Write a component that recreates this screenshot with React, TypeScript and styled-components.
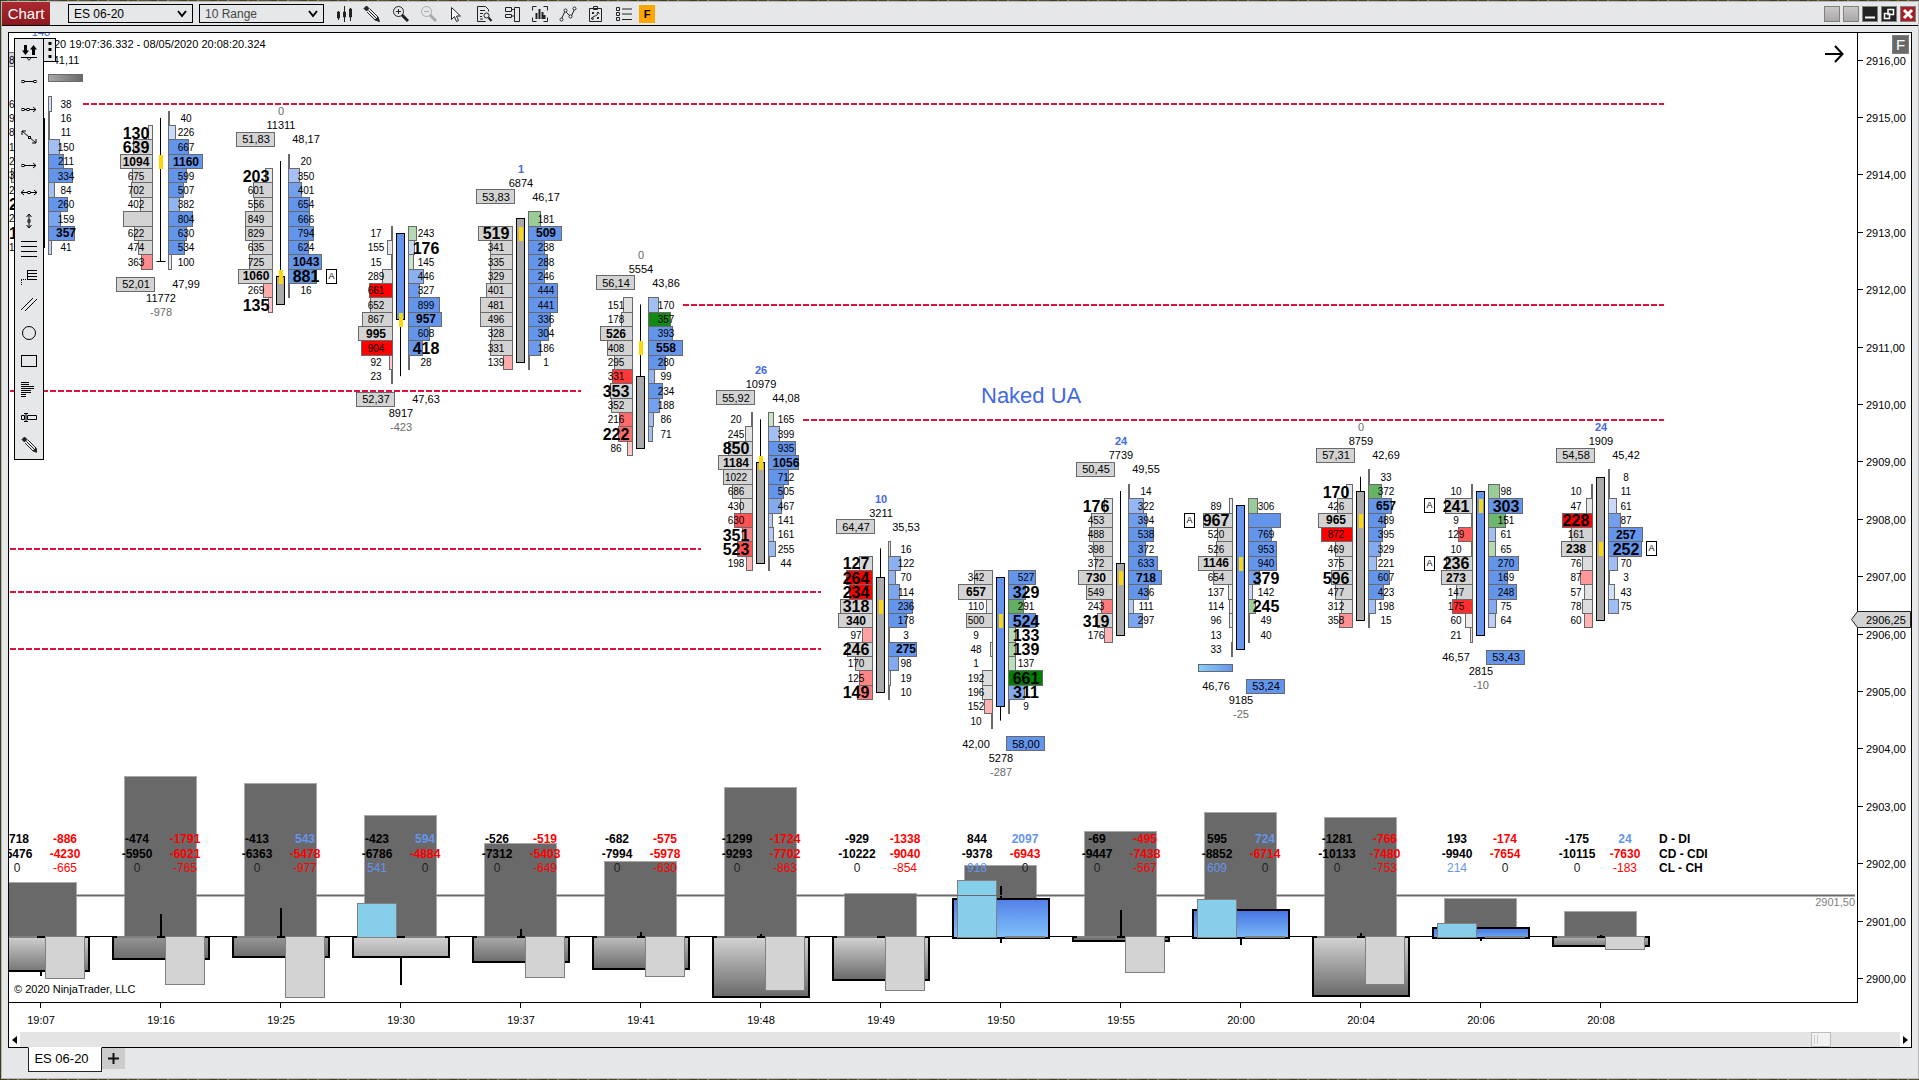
import React from "react";
import styled, { createGlobalStyle } from "styled-components";

/* ---------- data ---------- */

type Side = "L" | "R" | "";

interface Column {
  time: string;
  askStart: number;
  bids: string[];
  bidStart: number;
  asks: string[];
  wick?: [number, number];
  body: [number, number];
  up?: boolean;
  flat?: boolean;
  poc?: number;
  flags?: [Side, number][];
  summary?: { at: "top" | "bottom"; left: string; right: string; boxed: Side; volume: string; count: string; gap?: number };
  strip?: { side: Side; tick: number; up: boolean };
  volTop: number;
  delta: { top?: number; bottom?: number; from: string; to: string; wicks?: [number, number][] };
  low?: number;
  high?: number;
  table: [string, string, string, string, string, string];
}

// Cell notation: volume, b / B for emphasis, then r (sell imbalance), g (buy
// imbalance) or a (plain) with an opacity in percent. "_" hides the number.
const columns: Column[] = [
  {
    time: "19:07", bidStart: 3, bids: [], askStart: 3,
    asks: ["38a30", "16", "11", "150a60", "211", "334", "84a60", "260", "159a85", "357b", "41a40"],
    body: [4, 13], strip: { side: "R", tick: 1.2, up: false },
    volTop: 882, delta: { bottom: 972, from: "#cfcfcf", to: "#767676", wicks: [[972, 976]] }, high: 978,
    table: ["-718", "-886", "-5476", "-4230", "0", "-665"],
  },
  {
    time: "19:16", bidStart: 5, askStart: 4,
    bids: ["130B", "639B", "1094b", "675", "702", "402", "_1000", "622", "474", "363r45"],
    asks: ["40a0", "226a35", "667", "1160b", "599", "507", "382a70", "804", "630", "534", "100a20"],
    wick: [4, 14], body: [14, 14], flat: true, poc: 7,
    summary: { at: "bottom", left: "52,01", right: "47,99", boxed: "L", volume: "11772", count: "-978" },
    volTop: 776, delta: { bottom: 960, from: "#949494", to: "#6c6c6c", wicks: [[914, 936]] }, high: 984,
    table: ["-474", "-1791", "-5950", "-6021", "0", "-765"],
  },
  {
    time: "19:25", bidStart: 8, askStart: 7,
    bids: ["203B", "601", "556", "849", "829", "635", "725", "1060b", "269r33", "135Br22"],
    asks: ["20", "350a58", "401a90", "654", "666", "794", "624", "1043b", "881B", "16"],
    wick: [7, 15], body: [15, 17], poc: 15, flags: [["R", 15]],
    summary: { at: "top", left: "51,83", right: "48,17", boxed: "L", volume: "11311", count: "0" },
    volTop: 783, delta: { bottom: 958, from: "#989898", to: "#6c6c6c", wicks: [[908, 936]] }, high: 997,
    table: ["-413", "543", "-6363", "-5478", "0", "-977"],
  },
  {
    time: "19:30", bidStart: 12, askStart: 12,
    bids: ["17", "155", "15", "289", "661r100", "652", "867", "995b", "904r100", "92r22", "23"],
    asks: ["243g30", "176Ba38", "145g22", "446a75", "327a95", "899", "957b", "608", "418B", "28"],
    wick: [18, 22], body: [12, 18], up: true, poc: 18,
    summary: { at: "bottom", left: "52,37", right: "47,63", boxed: "L", volume: "8917", count: "-423" },
    volTop: 815, delta: { bottom: 958, from: "#d3d3d3", to: "#a9a9a9", wicks: [[958, 985]] }, low: 903,
    table: ["-423", "594", "-6786", "-4884", "541", "0"],
  },
  {
    time: "19:37", bidStart: 12, askStart: 11,
    bids: ["519B", "341", "335", "329", "401", "481", "496", "328", "331", "139r33"],
    asks: ["181g40", "509b", "238", "288", "246", "444", "441", "336", "304", "186", "1"],
    body: [11, 21], poc: 12,
    summary: { at: "top", left: "53,83", right: "46,17", boxed: "L", volume: "6874", count: "1" },
    volTop: 843, delta: { bottom: 963, from: "#aaaaaa", to: "#6c6c6c", wicks: [[929, 936]] }, high: 977,
    table: ["-526", "-519", "-7312", "-5403", "0", "-649"],
  },
  {
    time: "19:41", bidStart: 17, askStart: 17,
    bids: ["151", "178", "526b", "408", "295", "331r78", "353B", "352", "216r58", "222Br58", "86r22"],
    asks: ["170a60", "357g93", "393", "558b", "280", "99a70", "234", "188", "86a60", "71a60"],
    wick: [17, 22], body: [22, 27], poc: 20,
    summary: { at: "top", left: "56,14", right: "43,86", boxed: "L", volume: "5554", count: "0" },
    volTop: 861, delta: { bottom: 970, from: "#bdbdbd", to: "#6c6c6c", wicks: [[932, 936]] }, high: 976,
    table: ["-682", "-575", "-7994", "-5978", "0", "-630"],
  },
  {
    time: "19:48", bidStart: 25, askStart: 25,
    bids: ["20", "245", "850B", "1184b", "1022", "686", "430", "630r68", "351Br50", "523Br68", "198r30"],
    asks: ["165g22", "399a60", "935", "1056b", "712", "505", "467a80", "141a50", "161a50", "255a65", "44a20"],
    wick: [25, 28], body: [28, 35], poc: 28,
    summary: { at: "top", left: "55,92", right: "44,08", boxed: "L", volume: "10979", count: "26" },
    volTop: 787, delta: { bottom: 998, from: "#d3d3d3", to: "#696969", wicks: [[934, 936]] }, high: 990,
    table: ["-1299", "-1724", "-9293", "-7702", "0", "-863"],
  },
  {
    time: "19:49", bidStart: 35, askStart: 34,
    bids: ["127B", "264Br100", "234Br100", "318B", "340b", "97r37", "246B", "170", "125r48", "149Br52"],
    asks: ["16g15", "122a75", "70a70", "114a85", "236", "178", "3", "275b", "98a80", "19a30", "10"],
    wick: [34, 36], body: [36, 44], poc: 38,
    summary: { at: "top", left: "64,47", right: "35,53", boxed: "L", volume: "3211", count: "10" },
    volTop: 893, delta: { bottom: 981, from: "#d3d3d3", to: "#696969" }, high: 990,
    table: ["-929", "-1338", "-10222", "-9040", "0", "-854"],
  },
  {
    time: "19:50", bidStart: 36, askStart: 36,
    bids: ["342", "657b", "110", "500", "9", "48", "1", "192", "196", "152r30", "10"],
    asks: ["527", "329B", "291g62", "524B", "133Bg28", "139Bg34", "137g27", "661Bg100", "311Ba80", "9"],
    wick: [45, 46], body: [36, 45], up: true, poc: 39,
    summary: { at: "bottom", left: "42,00", right: "58,00", boxed: "R", volume: "5278", count: "-287" },
    volTop: 865, delta: { top: 898, bottom: 939, from: "#5180e8", to: "#82c2fa", wicks: [[886, 898], [939, 943]] }, low: 880,
    table: ["844", "2097", "-9378", "-6943", "918", "0"],
  },
  {
    time: "19:55", bidStart: 31, askStart: 30,
    bids: ["176B", "453", "488", "398", "372", "730b", "549", "243r52", "319B", "176r30"],
    asks: ["14", "322a68", "394a92", "538", "372", "633", "718b", "436", "111a50", "297a85"],
    wick: [30, 35], body: [35, 40], poc: 36,
    summary: { at: "top", left: "50,45", right: "49,55", boxed: "L", volume: "7739", count: "24" },
    volTop: 831, delta: { bottom: 942, from: "#7c7c7c", to: "#6c6c6c", wicks: [[910, 936]] }, high: 972,
    table: ["-69", "-495", "-9447", "-7438", "0", "-567"],
  },
  {
    time: "20:00", bidStart: 31, askStart: 31,
    bids: ["89", "967B", "520", "526", "1146b", "654", "137", "114", "96", "13", "33"],
    asks: ["306g40", "_1080", "769", "953", "940", "379B", "142a35", "245Bg38", "49g0", "40g0"],
    body: [31, 41], up: true, poc: 35, flags: [["L", 32]],
    summary: { at: "bottom", left: "46,76", right: "53,24", boxed: "R", volume: "9185", count: "-25", gap: 37 },
    strip: { side: "L", tick: 42.3, up: true },
    volTop: 812, delta: { top: 909, bottom: 939, from: "#4472e2", to: "#7cbaf8", wicks: [[939, 945]] }, low: 899,
    table: ["595", "724", "-8852", "-6714", "609", "0"],
  },
  {
    time: "20:04", bidStart: 30, askStart: 29,
    bids: ["170B", "426", "965b", "872r100", "469", "375", "596B", "477", "312", "358r43"],
    asks: ["33g0", "372g60", "657b", "489", "395", "329a80", "221a62", "607", "423", "198a60", "15"],
    wick: [29, 30], body: [30, 39], poc: 32,
    summary: { at: "top", left: "57,31", right: "42,69", boxed: "L", volume: "8759", count: "0" },
    volTop: 817, delta: { bottom: 997, from: "#d3d3d3", to: "#696969", wicks: [[933, 936]] }, high: 984,
    table: ["-1281", "-766", "-10133", "-7480", "0", "-753"],
  },
  {
    time: "20:06", bidStart: 30, askStart: 30,
    bids: ["10", "241B", "9", "129r65", "10", "236B", "273b", "147", "175r82", "60a45", "21r15"],
    asks: ["98g40", "303B", "151g57", "61a60", "65g30", "270", "169", "248", "75a80", "64a45"],
    body: [30, 40], up: true, poc: 31, flags: [["L", 31], ["L", 35]],
    summary: { at: "bottom", left: "46,57", right: "53,43", boxed: "R", volume: "2815", count: "-10" },
    volTop: 898, delta: { top: 927, bottom: 939, from: "#4777e4", to: "#6ea8f2", wicks: [[939, 941]] }, low: 923,
    table: ["193", "-174", "-9940", "-7654", "214", "0"],
  },
  {
    time: "20:08", bidStart: 30, askStart: 29,
    bids: ["10", "47", "228Br100", "161", "238b", "76", "87r40", "57", "78", "60r30"],
    asks: ["8g0", "11a0", "61a35", "87", "257b", "252B", "70a62", "3", "43a30", "75a62"],
    body: [29, 39], poc: 34, flags: [["R", 34]],
    summary: { at: "top", left: "54,58", right: "45,42", boxed: "L", volume: "1909", count: "24" },
    volTop: 911, delta: { bottom: 947, from: "#b4b4b4", to: "#7c7c7c", wicks: [[935, 936]] }, high: 949,
    table: ["-175", "24", "-10115", "-7630", "0", "-183"],
  },
];

const nakedLevels: [number, number, number][] = [
  [83, 1664, 104], [683, 1664, 305], [10, 581, 391], [803, 1664, 420],
  [10, 701, 549], [10, 821, 592], [10, 821, 649],
];

/* ---------- scales ---------- */

const tickY = (n: number) => 60.5 + 14.35 * n;
const rowTop = (n: number) => Math.round(tickY(n) - 7.2) + 0.5;
const columnX = (i: number) => 40.5 + 120 * i;
const BAR = 34;
const ZERO = 936;

const parse = (cell: string) => {
  const m = /^(_?)(\d+)([bB]?)([rga]?)(\d*)$/.exec(cell)!;
  return { hidden: m[1] === "_", value: +m[2], text: m[2], weight: m[3], kind: m[4], alpha: m[5] === "" ? null : +m[5] / 100 };
};

/* ---------- styles ---------- */

const ARIAL = `"Liberation Sans", Arial, sans-serif`;

const GlobalStyle = createGlobalStyle`
  * { box-sizing: border-box; }
  body {
    margin: 0;
    font-family: ${ARIAL};
    font-size: 12px;
    color: #000;
    background: repeating-linear-gradient(90deg, #3a3d1c 0 7px, #6d6f3a 7px 9px, #4a4028 9px 17px, #7c8a3c 17px 19px, #55503c 19px 30px);
  }
  button { font-family: inherit; padding: 0; border: 0; background: none; color: inherit; }
`;

const Desktop = styled.div`
  min-height: 100vh;
  padding: 1px 0 1px 1px;
  display: flex;
  flex-direction: column;
`;

const Window = styled.main`
  flex: 1;
  display: flex;
  flex-direction: column;
  border: 1px solid #b8b8b8;
  background: #e5e7e9;
`;

const TitleBar = styled.header`
  display: flex;
  align-items: center;
  height: 24px;
  border-bottom: 1px solid #000;
`;

const ChartMenu = styled.button`
  align-self: stretch;
  width: 48px;
  margin-right: 18px;
  font-size: 15px;
  color: #fff;
  background: linear-gradient(#ac2a30, #8c181e);
`;

const Picker = styled.label`
  position: relative;
  display: flex;
  margin-right: 6px;
  svg { position: absolute; right: 6px; top: 6px; pointer-events: none; }
`;

const PickerSelect = styled.select<{ $tone: string }>`
  appearance: none;
  width: 125px;
  height: 19px;
  padding: 0 5px;
  border: 1px solid #000;
  border-radius: 0;
  background: #e5e7e9;
  color: ${(p) => p.$tone};
  font: 12px ${ARIAL};
`;

const ToolGroup = styled.div`
  display: flex;
  align-items: center;
`;

const ToolButton = styled.button<{ $faded?: boolean }>`
  width: 28px;
  height: 22px;
  display: grid;
  place-items: center;
  opacity: ${(p) => (p.$faded ? 0.3 : 1)};
`;

const FixedBadge = styled.button`
  width: 16px;
  height: 18px;
  margin-left: 1px;
  background: #ffa500;
  font-size: 11px;
  font-weight: bold;
`;

const WindowControls = styled.div`
  display: flex;
  gap: 3px;
  margin-left: auto;
  padding-right: 2px;
`;

const ControlButton = styled.button<{ $fill: string }>`
  width: 16px;
  height: 16px;
  display: grid;
  place-items: center;
  border: 1px solid #808080;
  background: ${(p) => p.$fill};
`;

const Panel = styled.section`
  position: relative;
  margin: 6px 6px 0;
  border: 1px solid #000;
  background: #fff;
`;

const ChartRow = styled.div`
  display: flex;
`;

const Plot = styled.svg`
  display: block;
  flex: 1;
  min-width: 0;
  height: 999px;
`;

const PriceAxis = styled.svg`
  display: block;
  flex: none;
  width: 54px;
  height: 999px;
  overflow: visible;
`;

const Label = styled.text<{ $size?: number; $bold?: boolean; $fill?: string; $anchor?: string }>`
  font-family: ${ARIAL};
  font-size: ${(p) => p.$size ?? 11}px;
  font-weight: ${(p) => (p.$bold ? "bold" : "normal")};
  fill: ${(p) => p.$fill ?? "#000"};
  text-anchor: ${(p) => p.$anchor ?? "middle"};
`;

const DrawingTools = styled.nav`
  position: absolute;
  left: 5px;
  top: 5px;
  display: flex;
  align-items: flex-start;
`;

const DrawingList = styled.div`
  display: flex;
  flex-direction: column;
  width: 30px;
  border: 1px solid #000;
  background: #e5e7e9;
`;

const DrawingButton = styled.button`
  height: 28px;
  display: grid;
  place-items: center;
`;

const Handle = styled.button`
  width: 13px;
  height: 24px;
  margin-left: -1px;
  display: grid;
  place-items: center;
  border: 1px solid #000;
  background: #e5e7e9;
`;

const JumpButton = styled.button`
  position: absolute;
  top: 12px;
  right: 67px;
  display: flex;
`;

const AxisBadge = styled.button`
  position: absolute;
  top: 2px;
  right: 2px;
  width: 17px;
  height: 19px;
  border: 1px solid #808080;
  background: #696969;
  color: #fff;
  font-size: 15px;
  line-height: 17px;
`;

const ScrollBar = styled.div`
  display: flex;
  height: 15px;
  background: #e4e4e4;
`;

const ScrollArrow = styled.button`
  width: 11px;
  display: grid;
  place-items: center;
  background: #fff;
`;

const ScrollTrack = styled.div`
  flex: 1;
  display: flex;
  justify-content: flex-end;
  padding-right: 69px;
`;

const ScrollThumb = styled.div`
  width: 20px;
  border: 1px solid #bcbcbc;
  background: #f1f1f1;
  display: flex;
  gap: 2px;
  padding: 2px;
  &::before, &::after { content: ""; width: 1px; background: #cfcfcf; }
`;

const TabBar = styled.footer`
  display: flex;
  align-items: flex-start;
  min-height: 31px;
  margin-top: -1px;
  padding-left: 26px;
  z-index: 1;
`;

const Tab = styled.button`
  width: 74px;
  height: 25px;
  padding: 0 7px 2px 0;
  border: 1px solid #222;
  border-top-color: #fff;
  background: #fff;
  font-size: 13px;
`;

const AddTab = styled.button`
  width: 23px;
  height: 21px;
  margin-top: 1px;
  padding-bottom: 1px;
  display: grid;
  place-items: center;
  background: #cccccc;
`;

/* ---------- icons ---------- */

const Icon = ({ children, w = 18, h = 18 }: { children: React.ReactNode; w?: number; h?: number }) => (
  <svg width={w} height={h} viewBox={`0 0 ${w} ${h}`} fill="none" stroke="#222" strokeWidth={1} aria-hidden="true">
    {children}
  </svg>
);

const Pencil = () => (
  <g stroke="#222">
    <path d="M1 3.500l2.500-2.500 2.500 2.500-2.500 2.500z" fill="#222" />
    <path d="M4 7l8 8M7 4l8 8M5.500 5.500l8 8" />
    <path d="M12 15l4.500 1.500-1.500-4.500z" fill="#222" />
  </g>
);

const Knob = ({ x, y }: { x: number; y: number }) => (
  <rect x={x - 1} y={y - 1} width={2} height={2} fill="#fff" stroke="#000" />
);

const toolbarIcons: [string, React.ReactNode, boolean?][] = [
  ["Chart style", <><path d="M3.500 6v9M9.500 1v16M15.500 3v13" /><path d="M2.500 7h2v6h-2zM8.500 7h2v5h-2zM14.500 4h2v8h-2z" fill="#222" /></>],
  ["Drawing tools", <Pencil />],
  ["Zoom in", <><circle cx="7.500" cy="6.500" r="5" /><path d="M7.500 4v5M5 6.500h5" /><path d="M11 10l6 6" strokeWidth={3} /></>],
  ["Zoom out", <><circle cx="7.500" cy="6.500" r="5" /><path d="M5 6.500h5" /><path d="M11 10l6 6" strokeWidth={3} /></>, true],
  ["Cursor", <path d="M4.500 2.500v12l3-3 2 5 2-1-2-4.500h4z" fill="#fff" />],
  ["Data box", <><path d="M13.500 6.500v-2l-3-3h-8v15h8M5 5.500h5M5 8.500h3M5 11.500h2M5 14h3" /><circle cx="11.500" cy="10.500" r="2.500" /><path d="M13.500 12.500l3 3.500" strokeWidth={2} /></>],
  ["Chart trader", <><path d="M11.500 2.500h5v14h-5zM2.500 2.500h6v4h-6zM2.500 9.500h6v3h-6zM8.500 4.500h3M8.500 11h3" /></>],
  ["Data series", <><path d="M5.500 1.500h-4v4M12.500 1.500h4v4M1.500 12.500v4h4M16.500 12.500v4h-4" /><path d="M5.500 8v6M8.500 4v10M11.500 7v7M13.500 10v4" strokeWidth={2} /></>],
  ["Indicators", <><path d="M2 15l4-9 6 6 4-9" /><circle cx="2.500" cy="14.500" r="1.500" fill="#fff" /><circle cx="6.500" cy="5.500" r="1.500" fill="#fff" /><circle cx="11.500" cy="11.500" r="1.500" fill="#fff" /><circle cx="15.500" cy="3.500" r="1.500" fill="#fff" /></>],
  ["Strategies", <><path d="M2.500 3.500h12v13h-12zM6.500 1.500h4v3h-4zM5 7l2 2M7 7l-2 2M10 12l2 2M12 12l-2 2M5 14c0-4 6-2 6-6M9.500 8.500l1.500-1.500 1.500 1.500" /><circle cx="5.500" cy="13.500" r="1" /></>],
  ["Properties", <><path d="M1.500 2.500h3v3h-3zM1.500 7.500h3v3h-3zM1.500 12.500h3v3h-3zM7 4h10M7 9h10M7 14.500h10" /></>],
];

const drawingIcons: [string, React.ReactNode][] = [
  ["Snap mode", <><path d="M3 1h3v5.500h2L4.500 11 1 6.500h2zM11 11v-5.500H9L12.500 1 16 5.500h-2V11z" fill="#000" stroke="none" /><path d="M0 13.500h16" stroke="#000" /><path d="M6.500 14c0 2.500 3 2.500 3 0" stroke="#000" /></>],
  ["Line", <><path d="M1 9.500h14" stroke="#000" /><Knob x={2} y={9.5} /><Knob x={14} y={9.5} /></>],
  ["Ray", <><path d="M1 9.500h14M12 7l3 2.500-3 2.500" stroke="#000" /><Knob x={2} y={9.5} /><Knob x={7} y={9.5} /></>],
  ["Extended line", <><path d="M1 3l14 12M1 7v-4h4M15 11v4h-4" stroke="#000" /><Knob x={8.5} y={9.5} /></>],
  ["Arrow line", <><path d="M1 9.500h14M12 7l3 2.500-3 2.500" stroke="#000" /><Knob x={2} y={9.5} /></>],
  ["Horizontal line", <><path d="M0 8.500h16M3 6l-3 2.500 3 2.500M13 6l3 2.500-3 2.500" stroke="#000" /><Knob x={8} y={8.5} /></>],
  ["Vertical line", <><path d="M8 2v14M5.500 5l2.500-3 2.500 3M5.500 13l2.500 3 2.500-3" stroke="#000" /><Knob x={8} y={9} /></>],
  ["Fibonacci retracements", <path d="M0 1.500h16M0 6.500h16M0 11.500h16M0 16.500h16" stroke="#000" />],
  ["Fibonacci extensions", <><path d="M6 2.500h10M6 5.500h10M6 8.500h10M6 11.500h10M6.500 2v9" stroke="#000" /><path d="M0 11.500h6M.5 12v6" stroke="#000" strokeDasharray="1 1" /></>],
  ["Parallel channel", <path d="M0 14l12-12M4 15l12-12" stroke="#000" />],
  ["Ellipse", <circle cx="8" cy="9" r="6.500" stroke="#000" />],
  ["Rectangle", <rect x=".5" y="3.500" width="15" height="11" stroke="#000" />],
  ["Volume profile", <path d="M0 2.500h8M0 4.500h8M0 6.500h13M0 8.500h13M0 10.500h10M0 12.500h10M0 14.500h5M0 16.500h5" stroke="#000" />],
  ["Price range", <><path d="M.5 7.500h3v4h-3zM6.500 7.500h9v4h-9zM3 5.500h4M3 13.500h4M5 5v9" stroke="#000" /></>],
  ["Brush", <Pencil />],
];

/* ---------- chart parts ---------- */

const cellText = {
  "": { size: 10, drop: 4.2 },
  b: { size: 12, drop: 4.6 },
  B: { size: 16, drop: 6.5 },
} as Record<string, { size: number; drop: number }>;

function Footprint({ x, start, cells, side, max }: { x: number; start: number; cells: string[]; side: "L" | "R"; max: number }) {
  const parsed = cells.map(parse);
  return (
    <g>
      {parsed.map((c, i) => {
        const w = Math.round((BAR * c.value) / max);
        const top = rowTop(start + i);
        const h = rowTop(start + i + 1) - top;
        const ratio = c.value / max;
        const alpha = c.alpha ?? (side === "L" ? Math.min(1, 0.3 + 1.6 * ratio) : Math.min(1, 0.1 + 2.4 * ratio));
        const color = c.kind === "r" ? "#ff0000" : c.kind === "g" ? "#008000" : side === "L" ? "#d3d3d3" : "#6495ed";
        return (
          <rect key={i} x={side === "L" ? x - 8 - w : x + 8} y={top} width={Math.max(w, side === "R" ? 1 : 0.01)} height={h}
            fill={color} fillOpacity={alpha} stroke="#696969" />
        );
      })}
      {parsed.map((c, i) => {
        if (c.hidden) return null;
        const t = cellText[c.weight];
        return (
          <Label key={i} x={side === "L" ? x - 24.5 : x + 25.5} y={Math.round(tickY(start + i) + t.drop)}
            $size={t.size} $bold={c.weight !== ""}>
            {c.text}
          </Label>
        );
      })}
    </g>
  );
}

function Candle({ x, col }: { x: number; col: Column }) {
  const top = Math.round(tickY(col.body[0])) + 0.5;
  const bottom = Math.round(tickY(col.body[1])) + 0.5;
  return (
    <g>
      {col.wick && <line x1={x} x2={x} y1={tickY(col.wick[0])} y2={tickY(col.wick[1])} stroke="#000" />}
      {col.flat ? (
        <line x1={x - 4} x2={x + 5} y1={top} y2={top} stroke="#000" />
      ) : (
        <rect x={x - 4} y={top} width={8} height={bottom - top} fill={col.up ? "#6495ed" : "#a9a9a9"} stroke="#000" />
      )}
      {col.poc !== undefined && <rect x={x - 1.5} y={rowTop(col.poc) + 0.5} width={4} height={14} fill="#ffd700" />}
    </g>
  );
}

function Summary({ x, col }: { x: number; col: Column }) {
  const s = col.summary;
  if (!s) return null;
  const first = Math.min(col.bidStart, col.askStart);
  const last = Math.max(col.bidStart + col.bids.length, col.askStart + col.asks.length) - 1;
  const dir = s.at === "top" ? -1 : 1;
  const center = s.at === "top" ? tickY(first) - 22 : tickY(last) + (s.gap ?? 22.6);
  const base = Math.round(center + 4.3);
  const n = Number(s.count);
  return (
    <g>
      <rect x={s.boxed === "L" ? x - 44 : x + 6} y={Math.round(center) - 6.5} width={38} height={14} fill={s.boxed === "L" ? "#d3d3d3" : "#6495ed"} stroke="#696969" />
      <Label x={x - 24.5} y={base}>{s.left}</Label>
      <Label x={x + 25.5} y={base}>{s.right}</Label>
      <Label x={x + 0.5} y={base + dir * 14}>{s.volume}</Label>
      <Label x={x + 0.5} y={base + dir * 28} $bold={n > 0} $fill={n > 0 ? "#4169e1" : "#696969"}>{s.count}</Label>
    </g>
  );
}

function DeltaPanel({ x, col, id }: { x: number; col: Column; id: string }) {
  const { top = ZERO, bottom = ZERO, from, to, wicks = [] } = col.delta;
  return (
    <g>
      <linearGradient id={id} x1="0" y1="0" x2="0" y2="1">
        <stop offset="0" stopColor={from} />
        <stop offset="1" stopColor={to} />
      </linearGradient>
      {wicks.map(([a, b]) => (
        <rect key={a} x={x - 0.5} y={a} width={2} height={b - a} fill="#000" />
      ))}
      <rect x={x - 47.5} y={top + 1} width={96} height={bottom - top - 2} fill={`url(#${id})`} stroke="#000" strokeWidth={2} />
      {col.low !== undefined ? (
        <rect x={x - 43} y={col.low + 0.5} width={39} height={ZERO + 1 - col.low} fill="#87ceeb" stroke="#808080" />
      ) : (
        <rect x={x - 43.5} y={ZERO} width={40} height={2} fill="#808080" />
      )}
      {col.high !== undefined ? (
        <rect x={x + 5} y={ZERO + 0.5} width={39} height={col.high - ZERO} fill="#d3d3d3" stroke="#808080" />
      ) : (
        <rect x={x + 4.5} y={ZERO} width={40} height={2} fill="#808080" />
      )}
    </g>
  );
}

const signed = (v: string) => (v === "0" ? "#222" : v.startsWith("-") ? "#ff0000" : "#6495ed");

function DeltaTable({ x, rows }: { x: number; rows: Column["table"] }) {
  const l = x - 23.5;
  const r = x + 24.5;
  return (
    <g>
      <Label x={l} y={843} $size={12} $bold>{rows[0]}</Label>
      <Label x={r} y={843} $size={12} $bold $fill={signed(rows[1])}>{rows[1]}</Label>
      <Label x={l} y={858} $size={12} $bold>{rows[2]}</Label>
      <Label x={r} y={858} $size={12} $bold $fill={signed(rows[3])}>{rows[3]}</Label>
      <Label x={l} y={872} $size={12} $fill={signed(rows[4])}>{rows[4]}</Label>
      <Label x={r} y={872} $size={12} $fill={signed(rows[5])}>{rows[5]}</Label>
    </g>
  );
}

const edgeDigits: [string, number, boolean][] = [
  ["8", 60, false], ["6", 104, false], ["9", 118, false], ["8", 132, false], ["1", 147, false], ["2", 161, false],
  ["3", 175, false], ["2", 190, false], ["2", 204, true], ["2", 218, false], ["1", 233, true], ["1", 247, false],
];

function ChartPlot() {
  return (
    <Plot role="img" aria-label="ES 06-20 footprint chart, 10 Range">
      <defs>
        <linearGradient id="stripUp"><stop offset="0" stopColor="#87cefa" /><stop offset="1" stopColor="#6495ed" /></linearGradient>
        <linearGradient id="stripDown"><stop offset="0" stopColor="#a9a9a9" /><stop offset="1" stopColor="#696969" /></linearGradient>
      </defs>
      <g transform="translate(-9 -33)">
        <path d="M9 895.5H1855" stroke="#b4b4b4" strokeWidth={3} />
        {columns.map((c, i) => (
          <rect key={c.time} x={columnX(i) - 36} y={c.volTop + 0.5} width={72} height={ZERO - c.volTop} fill="#696969" stroke="#a9a9a9" />
        ))}
        <path d={`M9 ${ZERO + 0.5}H1600`} stroke="#000" />
        {columns.map((c, i) => (
          <DeltaPanel key={c.time} x={columnX(i)} col={c} id={`delta${i}`} />
        ))}
        <path d="M9 895.5H1855" stroke="#696969" />
        <Label x={1855} y={906} $anchor="end" $fill="#808080">2901,50</Label>
        {columns.map((c, i) => (
          <DeltaTable key={c.time} x={columnX(i)} rows={c.table} />
        ))}
        <Label x={1659} y={843} $size={12} $bold $anchor="start">D - DI</Label>
        <Label x={1659} y={858} $size={12} $bold $anchor="start">CD - CDI</Label>
        <Label x={1659} y={872} $size={12} $bold $anchor="start">CL - CH</Label>

        {nakedLevels.map(([a, b, y]) => (
          <line key={y} x1={a} x2={b} y1={y} y2={y} stroke="#dc143c" strokeWidth={2} strokeDasharray="6 2" />
        ))}

        <rect x={6.5} y={52.5} width={12} height={14} fill="#d3d3d3" stroke="#696969" />
        <rect x={11.5} y={168.5} width={8} height={14} fill="#d3d3d3" stroke="#696969" />
        {edgeDigits.map(([d, y, bold]) => (
          <Label key={y} x={9} y={y + (bold ? 6 : 4)} $anchor="start" $size={bold ? 16 : 10} $bold={bold}>{d}</Label>
        ))}
        <Label x={columnX(0) + 0.5} y={36} $fill="#4169e1">148</Label>
        <Label x={columnX(0) + 25.5} y={64}>41,11</Label>

        {columns.map((c, i) => {
          const x = columnX(i);
          const max = Math.max(...[...c.bids, ...c.asks].map((v) => parse(v).value));
          return (
            <g key={c.time}>
              <Candle x={x} col={c} />
              <Footprint x={x} start={c.bidStart} cells={c.bids} side="L" max={max} />
              <Footprint x={x} start={c.askStart} cells={c.asks} side="R" max={i === 0 ? 465 : max} />
              <Summary x={x} col={c} />
              {c.strip && (
                <rect x={c.strip.side === "L" ? x - 42 : x + 8} y={Math.round(tickY(c.strip.tick)) - 3.5} width={34} height={7}
                  fill={c.strip.up ? "url(#stripUp)" : "url(#stripDown)"} stroke="#696969" />
              )}
              {c.flags?.map(([side, n]) => (
                <g key={n}>
                  <rect x={side === "L" ? x - 56 : x + 46} y={rowTop(n)} width={10} height={14} fill="#fff" stroke="#000" />
                  <Label x={side === "L" ? x - 51 : x + 51} y={Math.round(tickY(n)) + 3} $size={9}>A</Label>
                </g>
              ))}
            </g>
          );
        })}

        <Label x={981} y={403} $size={22} $anchor="start" $fill="#4169e1">Naked UA</Label>
        <Label x={54} y={48} $anchor="start">20 19:07:36.332 - 08/05/2020 20:08:20.324</Label>
        <Label x={14} y={993} $anchor="start">© 2020 NinjaTrader, LLC</Label>

        <path d="M9 1002.5H1858" stroke="#000" />
        {columns.map((c, i) => (
          <g key={c.time}>
            <path d={`M${columnX(i)} 1003v5`} stroke="#000" />
            <Label x={columnX(i) + 0.5} y={1024}>{c.time}</Label>
          </g>
        ))}
      </g>
    </Plot>
  );
}

function Prices() {
  const levels = Array.from({ length: 17 }, (_, i) => 2916 - i);
  return (
    <PriceAxis role="img" aria-label="Price axis">
      <path d="M.5 0V970" stroke="#000" />
      {levels.map((p) => {
        const y = Math.round(tickY((2916 - p) * 4)) - 33;
        return (
          <g key={p}>
            <path d={`M1 ${y - 0.5}h5`} stroke="#000" />
            <Label x={9} y={y + 4} $anchor="start">{p},00</Label>
          </g>
        );
      })}
      <path d="M-5.500 586.500L.5 578.500H53.500V594.500H.5z" fill="#d3d3d3" stroke="#222" />
      <Label x={9} y={591} $anchor="start">2906,25</Label>
    </PriceAxis>
  );
}

const Chevron = () => (
  <svg width="10" height="8" viewBox="0 0 10 8" fill="none" stroke="#000" strokeWidth={2} aria-hidden="true">
    <path d="M1 1l4 5 4-5" />
  </svg>
);

export default function App() {
  return (
    <>
      <GlobalStyle />
      <Desktop>
        <Window>
          <TitleBar>
            <ChartMenu>Chart</ChartMenu>
            <Picker>
              <PickerSelect $tone="#000" aria-label="Instrument"><option>ES 06-20</option></PickerSelect>
              <Chevron />
            </Picker>
            <Picker>
              <PickerSelect $tone="#444" aria-label="Interval"><option>10 Range</option></PickerSelect>
              <Chevron />
            </Picker>
            <ToolGroup>
              {toolbarIcons.map(([name, icon, faded]) => (
                <ToolButton key={name} aria-label={name} $faded={faded}><Icon>{icon}</Icon></ToolButton>
              ))}
              <FixedBadge aria-label="Fixed scale">F</FixedBadge>
            </ToolGroup>
            <WindowControls>
              <ControlButton $fill="linear-gradient(#c8c6c6, #a9a7a7)" aria-label="Link instrument" />
              <ControlButton $fill="linear-gradient(#c8c6c6, #a9a7a7)" aria-label="Link interval" />
              <ControlButton $fill="#222" aria-label="Minimize">
                <Icon w={12} h={12}><path d="M1 9.500h10" stroke="#fff" strokeWidth={2} /></Icon>
              </ControlButton>
              <ControlButton $fill="#222" aria-label="Restore">
                <Icon w={12} h={12}><path d="M5 1.500h5.500v5h-5.500zM1.500 5.500h5v5h-5z" stroke="#fff" strokeWidth={1.5} fill="#222" /></Icon>
              </ControlButton>
              <ControlButton $fill="#a81e24" aria-label="Close">
                <Icon w={12} h={12}><path d="M2 2l8 8M10 2l-8 8" stroke="#fff" strokeWidth={3} /></Icon>
              </ControlButton>
            </WindowControls>
          </TitleBar>

          <Panel>
            <ChartRow>
              <ChartPlot />
              <Prices />
            </ChartRow>
            <ScrollBar>
              <ScrollArrow aria-label="Scroll left"><svg width="5" height="8" aria-hidden="true"><path d="M5 0v8L0 4z" /></svg></ScrollArrow>
              <ScrollTrack><ScrollThumb /></ScrollTrack>
              <ScrollArrow aria-label="Scroll right"><svg width="5" height="8" aria-hidden="true"><path d="M0 0v8l5-4z" /></svg></ScrollArrow>
            </ScrollBar>
            <DrawingTools aria-label="Drawing tools">
              <DrawingList>
                {drawingIcons.map(([name, icon]) => (
                  <DrawingButton key={name} aria-label={name}><Icon w={16}>{icon}</Icon></DrawingButton>
                ))}
              </DrawingList>
              <Handle aria-label="Move tool bar">
                <svg width="4" height="18" aria-hidden="true"><path d="M.5 1h3v3h-3zM.5 7h3v3h-3zM.5 14h3v3h-3z" /></svg>
              </Handle>
            </DrawingTools>
            <JumpButton aria-label="Go to latest bar">
              <svg width="19" height="18" fill="none" stroke="#000" strokeWidth={2} aria-hidden="true"><path d="M0 9h17M10 1l7.500 8-7.500 8" /></svg>
            </JumpButton>
            <AxisBadge aria-label="Fixed price scale">F</AxisBadge>
          </Panel>

          <TabBar>
            <Tab>ES 06-20</Tab>
            <AddTab aria-label="Add tab">
              <svg width="11" height="11" stroke="#111" strokeWidth={2} aria-hidden="true"><path d="M5.500 0v11M0 5.500h11" /></svg>
            </AddTab>
          </TabBar>
        </Window>
      </Desktop>
    </>
  );
}
